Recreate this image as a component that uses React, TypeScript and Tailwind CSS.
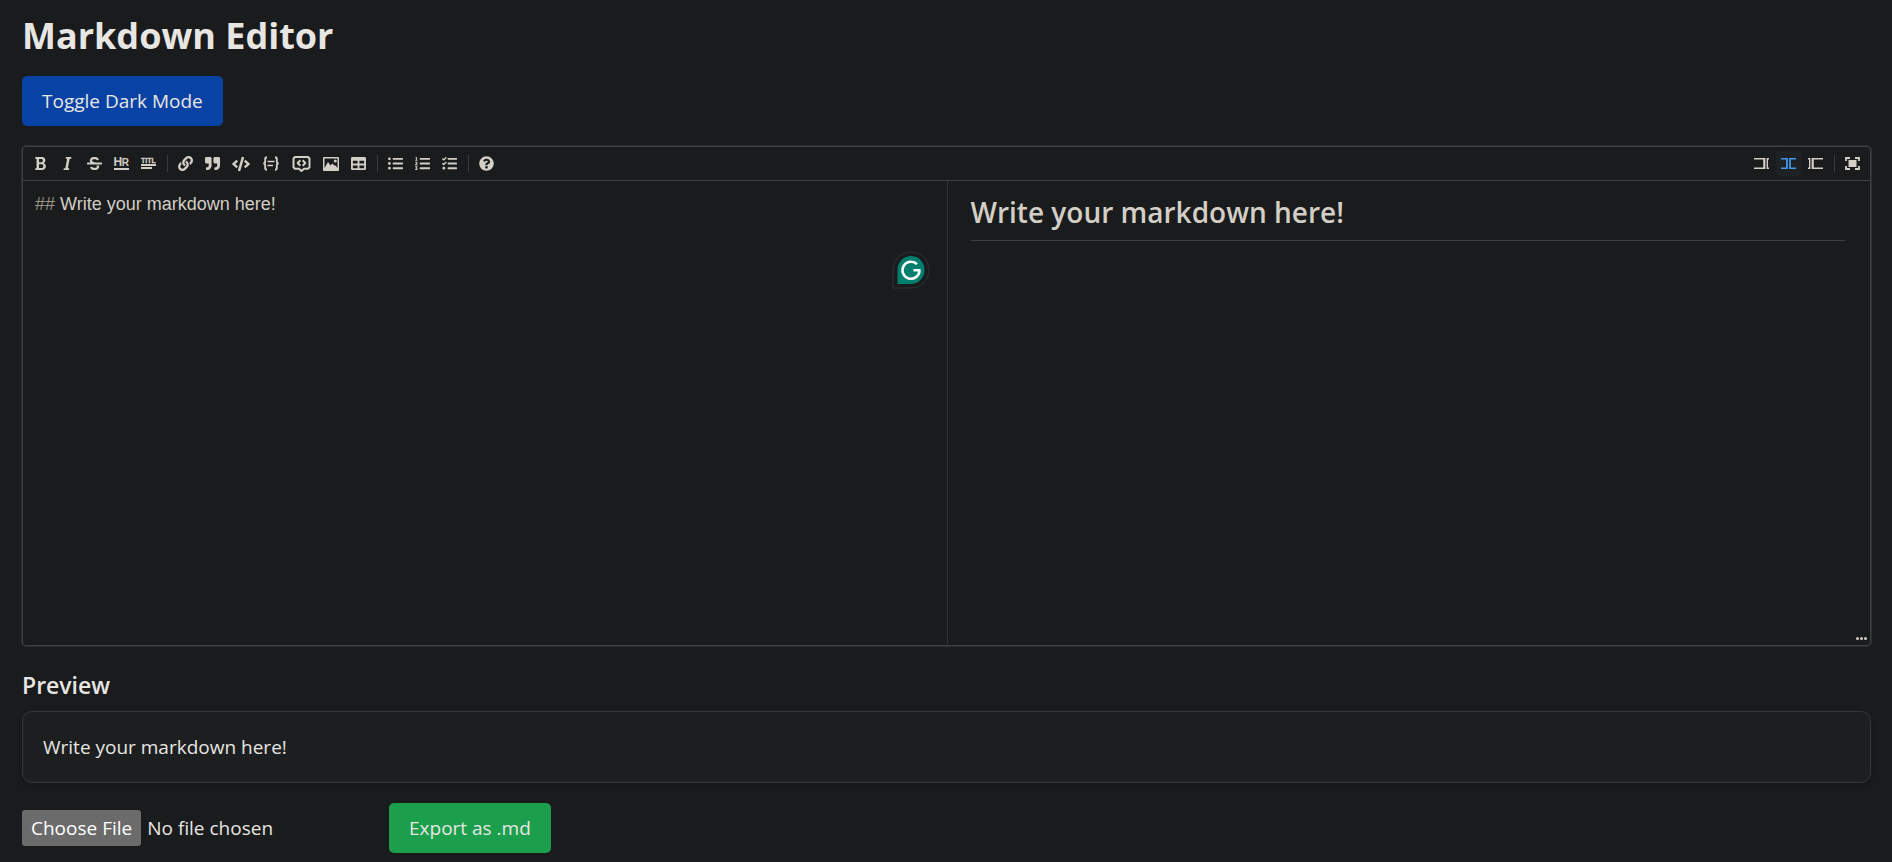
import type { ReactNode } from "react";
import { useState } from "react";
import {
  FaStrikethrough, FaLink, FaQuoteRight, FaCode, FaListUl, FaListOl, FaTasks, FaQuestionCircle, FaTable,
} from "react-icons/fa";

type Tool = { name: string; icon: ReactNode; active?: boolean };

const BoldIcon = () => (
  <svg viewBox="0 0 384 512" className="h-[15px] w-[15px]" fill="currentColor" aria-hidden="true">
    <path d="M304.793 243.891c33.639-18.537 53.657-54.16 53.657-95.693 0-48.236-26.25-87.626-68.626-104.179C265.138 34.01 240.849 32 209.661 32H24c-8.837 0-16 7.163-16 16v33.049c0 8.837 7.163 16 16 16h33.113v318.53H24c-8.837 0-16 7.163-16 16V464c0 8.837 7.163 16 16 16h195.69c24.203 0 44.834-1.289 66.866-7.584C337.52 457.193 376 410.647 376 350.014c0-52.168-26.573-91.684-71.207-106.123zM142.217 100.809h67.444c16.294 0 27.536 2.019 37.525 6.717 15.828 8.479 24.906 26.502 24.906 49.446 0 35.029-20.32 56.79-53.029 56.79h-76.846V100.809zm112.642 305.475c-10.14 4.056-22.677 4.907-31.409 4.907h-81.233V281.943h84.367c39.645 0 63.057 25.38 63.057 63.057.001 28.425-13.66 52.483-34.782 61.284z" />
  </svg>
);

const ItalicIcon = () => (
  <svg viewBox="0 0 320 512" className="h-[15px] w-[15px]" fill="currentColor" aria-hidden="true">
    <path d="M204.758 416h-33.849l62.092-320h40.725a16 16 0 0 0 15.704-12.937l6.242-32C297.599 41.184 290.034 32 279.968 32H120.235a16 16 0 0 0-15.704 12.937l-6.242 32C96.362 86.816 103.927 96 113.993 96h33.846l-62.09 320H46.278a16 16 0 0 0-15.704 12.935l-6.245 32C22.402 470.815 29.968 480 40.034 480h158.479a16 16 0 0 0 15.704-12.935l6.245-32c1.927-9.88-5.638-19.065-15.704-19.065z" />
  </svg>
);

const HrIcon = () => (
  <svg viewBox="0 0 15 15" className="h-[15px] w-[15px] overflow-visible" fill="currentColor" aria-hidden="true">
    <text x="-.5" y="10" fontFamily="Liberation Sans" fontWeight="700" fontSize="12">H</text>
    <text x="7.8" y="10" fontFamily="Liberation Sans" fontWeight="700" fontSize="10">R</text>
    <rect y="12" width="15" height="2" />
  </svg>
);

const TitleIcon = () => (
  <svg viewBox="0 0 15 15" className="h-[15px] w-[15px] overflow-visible" fill="currentColor" aria-hidden="true">
    <text x="0" y="6.5" fontFamily="Liberation Sans" fontWeight="700" fontSize="7" stroke="currentColor" strokeWidth=".3">TITL</text>
    <rect y="8" width="15" height="2" />
    <rect y="11" width="11" height="2" />
  </svg>
);

const CodeBlockIcon = () => (
  <svg viewBox="0 0 17 15" className="h-[15px] w-[18px]" fill="none" stroke="currentColor" strokeWidth="1.9" aria-hidden="true">
    <path d="M4.5 1.3C2.9 1.3 2.7 2 2.7 3v2.5c0 1.2-.6 2-1.9 2 1.3 0 1.9.8 1.9 2V12c0 1 .2 1.7 1.8 1.7M12.5 1.3c1.6 0 1.8.7 1.8 1.7v2.5c0 1.2.6 2 1.9 2-1.3 0-1.9.8-1.9 2V12c0 1-.2 1.7-1.8 1.7" />
    <path d="M5 5.5h7M5 9.5h5.5" strokeWidth="1.5" />
  </svg>
);

const CommentIcon = () => (
  <svg viewBox="0 0 18 16" className="h-4 w-[19px]" fill="none" stroke="currentColor" strokeWidth="2" strokeLinejoin="round" aria-hidden="true">
    <path d="M2.5 1h13L17 2.5v8.8L15.5 12.8h-4L9 15l-2.5-2.2h-4L1 11.3V2.5z" />
    <path d="M7.8 4.3 5.2 7l2.6 2.7M10.2 4.3 12.8 7l-2.6 2.7" />
  </svg>
);

const ImageIcon = () => (
  <svg viewBox="0 0 16 14" className="h-[14px] w-4" fill="currentColor" aria-hidden="true">
    <path fillRule="evenodd" d="M1 0h14a1 1 0 0 1 1 1v12a1 1 0 0 1-1 1H1a1 1 0 0 1-1-1V1a1 1 0 0 1 1-1zm.5 1.5v9.5l3.5-6 2.6 3.5 1.7-2 2.2 2 1 0 2 2.5V1.5zM12.3 2.5a1.5 1.5 0 1 1 0 3 1.5 1.5 0 0 1 0-3z" />
  </svg>
);

const PaneIcon = ({ kind }: { kind: "edit" | "live" | "preview" }) => (
  <svg viewBox="0 0 15 11" className="h-[11px] w-[15px]" fill="none" stroke="currentColor" strokeWidth="1.4" aria-hidden="true">
    {kind === "edit" && <path d="M0 .7h10M0 10.3h10M15 .7h-1.7v9.6H15" />}
    {kind === "edit" && <path d="M10.3 0v11" strokeWidth="2.2" />}
    {kind === "live" && <path d="M0 .7h6M0 10.3h6M15 .7H9M15 10.3H9" />}
    {kind === "live" && <path d="M6 0v11M9 0v11" strokeWidth="1.8" />}
    {kind === "preview" && <path d="M15 .7H5M15 10.3H5M0 .7h1.7v9.6H0" />}
    {kind === "preview" && <path d="M4.7 0v11" strokeWidth="2.2" />}
  </svg>
);

const FullscreenIcon = () => (
  <svg viewBox="0 0 15 13" className="h-[13px] w-[15px]" fill="none" stroke="currentColor" strokeWidth="1.8" aria-hidden="true">
    <path d="M1 4V1h4M10 1h4v3M14 9v3h-4M5 12H1V9" />
    <rect x="3.5" y="3" width="8" height="7" fill="currentColor" stroke="none" />
  </svg>
);

const groups: Tool[][] = [
  [
    { name: "Bold", icon: <BoldIcon /> },
    { name: "Italic", icon: <ItalicIcon /> },
    { name: "Strikethrough", icon: <FaStrikethrough size={15} /> },
    { name: "Horizontal rule", icon: <HrIcon /> },
    { name: "Title", icon: <TitleIcon /> },
  ],
  [
    { name: "Link", icon: <FaLink size={15} /> },
    { name: "Quote", icon: <FaQuoteRight size={15} /> },
    { name: "Code", icon: <FaCode size={18} /> },
    { name: "Code block", icon: <CodeBlockIcon /> },
    { name: "Comment", icon: <CommentIcon /> },
    { name: "Image", icon: <ImageIcon /> },
    { name: "Table", icon: <FaTable size={15} /> },
  ],
  [
    { name: "Unordered list", icon: <FaListUl size={15} /> },
    { name: "Ordered list", icon: <FaListOl size={15} /> },
    { name: "Checked list", icon: <FaTasks size={15} /> },
  ],
  [{ name: "Help", icon: <FaQuestionCircle size={15} /> }],
];

const viewGroups: Tool[][] = [
  [
    { name: "Edit", icon: <PaneIcon kind="edit" /> },
    { name: "Live", icon: <PaneIcon kind="live" />, active: true },
    { name: "Preview only", icon: <PaneIcon kind="preview" /> },
  ],
  [{ name: "Fullscreen", icon: <FullscreenIcon /> }],
];

const ToolGroups = ({ items }: { items: Tool[][] }) => (
  <div className="flex items-center">
    {items.map((group, i) => (
      <div key={i} className="flex items-center">
        {i > 0 && <span className="mr-[5px] ml-1 h-[17px] w-px bg-[#373b3e]" />}
        {group.map((t) => (
          <button
            key={t.name}
            type="button"
            aria-label={t.name}
            className={
              t.active
                ? "mr-[2px] flex h-[25px] items-center rounded-sm bg-[#1f2224] px-[5px] text-[#4299e8]"
                : "mr-[2px] flex h-[25px] items-center rounded-sm px-[5px] text-[#d3cec6]"
            }
          >
            {t.icon}
          </button>
        ))}
      </div>
    ))}
  </div>
);

export default function App() {
  const [text, setText] = useState("## Write your markdown here!");
  const [mark, ...rest] = text.split(" ");
  const plain = text.replace(/^#+\s*/, "");

  return (
    <main className="min-h-screen bg-[#191b1c] pt-3 pr-[21px] pb-2 pl-[22px] font-['Open_Sans',sans-serif] text-[19px] leading-[30px] text-[#e8e6e3]">
      <h1 className="text-[36px] leading-[48px] font-bold">Markdown Editor</h1>
      <button type="button" className="mt-4 block rounded-[5px] bg-[#0842a5] px-5 py-[10px]">
        Toggle Dark Mode
      </button>

      <section className="relative mt-5 flex h-[500px] flex-col rounded-[4px] border border-[#3b4043] shadow-[0_0_0_1px_#2b2f31]">
        <div className="flex h-[34px] items-center justify-between border-b border-[#3b4043] pr-[3px] pl-[5px]">
          <ToolGroups items={groups} />
          <ToolGroups items={viewGroups} />
        </div>
        <div className="grid flex-1 grid-cols-2">
          <div className="relative px-3 py-[11px] font-['Liberation_Sans',sans-serif] text-[18px] leading-[25px]">
            <pre aria-hidden="true" className="font-['Liberation_Sans',sans-serif] text-[#d3cec6]">
              <span className="text-[#9d9588]">{mark}</span> {rest.join(" ")}
            </pre>
            <textarea
              aria-label="Markdown source"
              value={text}
              onChange={(e) => setText(e.target.value)}
              className="absolute inset-0 resize-none bg-transparent px-3 py-[11px] text-transparent caret-white outline-none"
            />
            <svg viewBox="0 0 38 38" className="absolute top-[70px] right-[17px] h-[38px] w-[38px]" aria-hidden="true">
              <path d="M1 37V19A18 18 0 1 1 19 37z" fill="#191b1c" stroke="#303335" />
              <path d="M5.5 33V19A13.5 14 0 1 1 19 33z" fill="#027e6f" />
              <path d="M25 13.2A8.5 8.5 0 1 0 27.5 19.5M21.5 19.2h7" fill="none" stroke="#fff" strokeWidth="2.6" />
            </svg>
          </div>
          <div className="border-l border-[#303436] py-3 pr-[25px] pl-[23px] text-[#d3cec6]">
            <h2 className="border-b border-[#3b4043] pb-[9px] text-[28px] leading-[38px] font-semibold">{plain}</h2>
          </div>
        </div>
        <span className="absolute right-[3px] bottom-[5px] flex gap-px" aria-hidden="true">
          <i className="h-[3px] w-[3px] rounded-full bg-[#d3cec6]" />
          <i className="h-[3px] w-[3px] rounded-full bg-[#d3cec6]" />
          <i className="h-[3px] w-[3px] rounded-full bg-[#d3cec6]" />
        </span>
      </section>

      <h2 className="mt-[22px] text-[23px] leading-[34px] font-semibold">Preview</h2>
      <div className="mt-[9px] rounded-[10px] border border-[#35393b] bg-[#1c1e1f] p-5 shadow-md">
        <p>{plain}</p>
      </div>

      <div className="mt-5 flex items-center">
        <input
          type="file"
          aria-label="Import markdown file"
          className="w-[367px] file:mr-[6px] file:rounded-[3px] file:bg-[#6b6b6b] file:px-[9px] file:py-[3px] file:text-white"
        />
        <button type="button" className="rounded-[5px] bg-[#1c9f4d] px-5 py-[10px]">
          Export as .md
        </button>
      </div>
    </main>
  );
}
